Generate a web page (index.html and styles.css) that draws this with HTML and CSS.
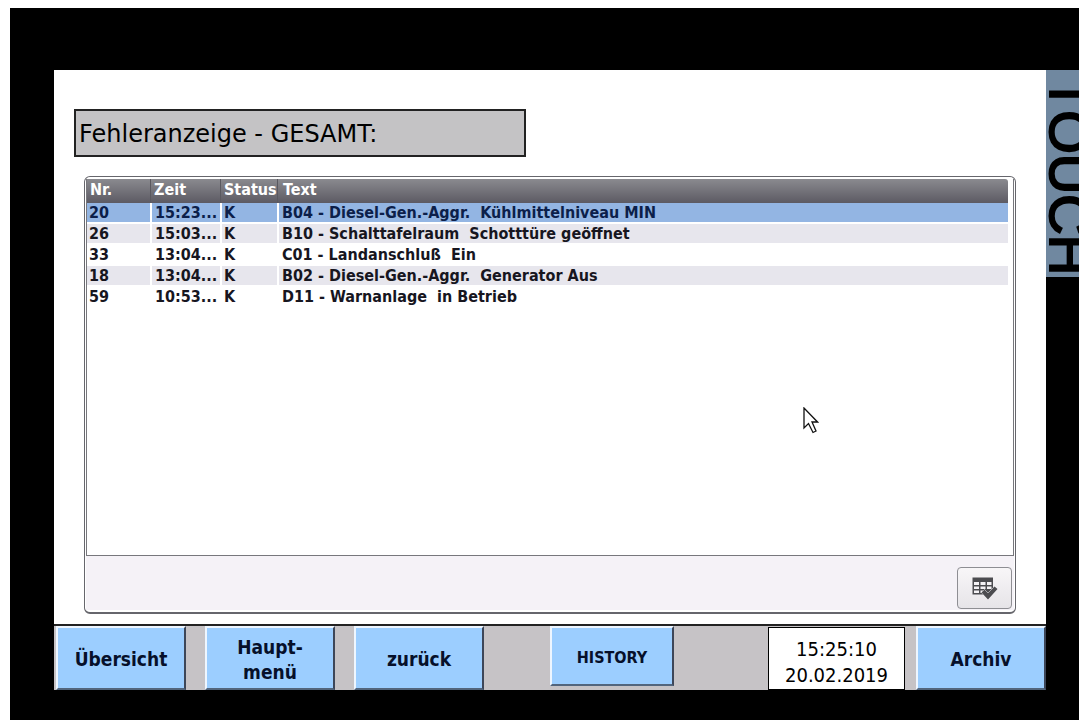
FILE: index.html
```
<!DOCTYPE html>
<html lang="de">
<head>
<meta charset="utf-8">
<title>Fehleranzeige - GESAMT</title>
<link rel="stylesheet" href="styles.css">
</head>
<body>
<div class="bezel">
  <div class="screen">
    <main class="content">
      <h1 class="title">Fehleranzeige - GESAMT:</h1>
      <section class="alarms">
        <div class="list">
          <table class="table">
            <thead>
              <tr><th class="nr">Nr.</th><th class="time">Zeit</th><th class="status">Status</th><th>Text</th></tr>
            </thead>
            <tbody>
              <tr class="selected"><td>20</td><td>15:23...</td><td>K</td><td>B04 - Diesel-Gen.-Aggr.  Kühlmittelniveau MIN</td></tr>
              <tr><td>26</td><td>15:03...</td><td>K</td><td>B10 - Schalttafelraum  Schotttüre geöffnet</td></tr>
              <tr><td>33</td><td>13:04...</td><td>K</td><td>C01 - Landanschluß  Ein</td></tr>
              <tr><td>18</td><td>13:04...</td><td>K</td><td>B02 - Diesel-Gen.-Aggr.  Generator Aus</td></tr>
              <tr><td>59</td><td>10:53...</td><td>K</td><td>D11 - Warnanlage  in Betrieb</td></tr>
            </tbody>
          </table>
          <svg class="cursor" width="16" height="28" viewBox="0 0 16 28" aria-hidden="true"><path d="M1 1V21L5.500 16.500L10 25.500L13 24L9 15H14.500Z" fill="#fff" stroke="#111" stroke-width="1.300"/></svg>
        </div>
        <div class="tools">
          <button class="ack" type="button" aria-label="Quittieren">
            <svg width="26" height="24" viewBox="0 0 26 24" aria-hidden="true">
              <path d="M0.500 0.500H21V17.500H0.500Z" fill="#4c4c50"/>
              <path d="M2 5h5v3H2zM8.500 5h5v3h-5zM15 5h4.500v3H15zM2 9.500h5v2.500H2zM8.500 9.500h5v2.500h-5zM15 9.500h4.500v2.500H15zM2 13.500h5v2.500H2zM8.500 13.500h5v2.500h-5z" fill="#f4f2f5"/>
              <path d="M9.500 15.500L12.500 12.500L16 16L22.500 9.500L25.500 12L16 22.500Z" fill="#4c4c50" stroke="#f1eff2" stroke-width="1" paint-order="stroke"/>
            </svg>
          </button>
        </div>
      </section>
    </main>
    <nav class="nav">
      <button class="key" type="button">Übersicht</button>
      <button class="key" type="button">Haupt-<br>menü</button>
      <button class="key" type="button">zurück</button>
      <button class="key history" type="button">HISTORY</button>
      <div class="clock"><time>15:25:10</time><time>20.02.2019</time></div>
      <button class="key archive" type="button">Archiv</button>
    </nav>
  </div>
  <div class="brand">TOUCH</div>
</div>
</body>
</html>
```
FILE: styles.css
```
* { box-sizing: border-box; }
body {
  margin: 0;
  padding: 8px 1px 0 10px;
  min-height: 100vh;
  display: flex;
  background: #fff;
  color: #000;
  font-family: "DejaVu Sans Condensed", "DejaVu Sans", sans-serif;
}
button { font-family: inherit; color: inherit; }
.bezel {
  flex: 1;
  display: grid;
  grid-template-columns: minmax(0, 1fr) 33px;
  padding: 62px 0 30px 44px;
  background: #000;
}
.screen { display: flex; flex-direction: column; background: #fff; }
.content {
  flex: 1;
  display: flex;
  flex-direction: column;
  gap: 19px;
  padding: 39px 30px 10px 20px;
}
.title {
  width: 452px;
  margin: 0;
  padding: 2px 3px 0;
  border: 2px solid #222;
  background: #c4c3c5;
  font-family: "DejaVu Sans", sans-serif;
  font-size: 24px;
  line-height: 42px;
  font-weight: 400;
}
.alarms {
  flex: 1;
  display: flex;
  flex-direction: column;
  margin-left: 10px;
  padding: 2px 1px;
  border: 1px solid #66666c;
  border-bottom-width: 2px;
  border-radius: 6px;
  background: #fff;
}
.list {
  position: relative;
  flex: 1;
  padding-right: 5px;
  border: 1px solid #77777c;
  border-top: 0;
}
.table {
  width: 100%;
  border-collapse: separate;
  border-spacing: 0;
  table-layout: fixed;
  font-size: 16px;
  line-height: 18px;
  font-weight: 600;
}
.nr { width: 63px; }
.time { width: 70px; }
.status { width: 57px; }
th {
  height: 24px;
  padding: 0 3px 2px;
  border-left: 1px solid #5a5960;
  background: linear-gradient(#8a8a8f, #5c5a63);
  color: #fff;
  text-align: left;
  white-space: nowrap;
}
th:first-child { border-left: 0; }
th:last-child { padding-left: 5px; border-radius: 0 3px 0 0; }
td {
  height: 21px;
  padding: 1px 0 0 3px;
  border-left: 2px solid #fff;
  border-bottom: 2px solid #fff;
  color: #17161f;
  white-space: pre;
}
td:first-child { padding-left: 2px; border-left: 0; }
td:nth-child(3) { padding-left: 2px; }
tr:nth-child(even) td { background: #e7e6ed; }
.selected td { background: #93b5e3; color: #0c1f4a; }
.cursor { position: absolute; left: 716px; top: 228px; }
.tools {
  display: flex;
  justify-content: flex-end;
  padding: 11px 2px 1px;
  background: #f5f2f7;
}
.ack {
  display: flex;
  align-items: center;
  justify-content: center;
  width: 55px;
  height: 42px;
  padding: 2px 0 0;
  border: 1px solid #8e8e93;
  border-radius: 4px;
  background: linear-gradient(#f8f6f8, #e6e4e8);
}
.nav {
  display: flex;
  align-items: flex-start;
  height: 66px;
  padding-left: 2px;
  border-top: 2px solid #222;
  background: #c6c3c6;
}
.key {
  width: 130px;
  height: 64px;
  margin-right: 19px;
  padding: 3px 0 0;
  border: 2px solid;
  border-color: #eef6ff #3d4658 #52657c #eef6ff;
  background: #9cceff;
  color: #06102a;
  font-size: 19px;
  line-height: 25px;
  font-weight: 600;
}
.history { width: 124px; height: 60px; margin-left: 47px; font-size: 16px; }
.clock {
  display: flex;
  flex-direction: column;
  align-items: center;
  width: 137px;
  height: 63px;
  margin: 1px 11px 0 auto;
  padding-top: 8px;
  border: 1px solid #000;
  background: #fff;
  font-size: 20px;
  line-height: 26px;
}
.archive { margin-right: 0; }
.brand {
  display: flex;
  align-items: flex-end;
  height: 207px;
  padding-top: 7px;
  overflow: hidden;
  background: #7088a0;
  writing-mode: vertical-rl;
  font-family: "Liberation Sans", sans-serif;
  font-size: 56px;
  line-height: 46px;
  white-space: nowrap;
  -webkit-text-stroke: 2px #000;
}
```
